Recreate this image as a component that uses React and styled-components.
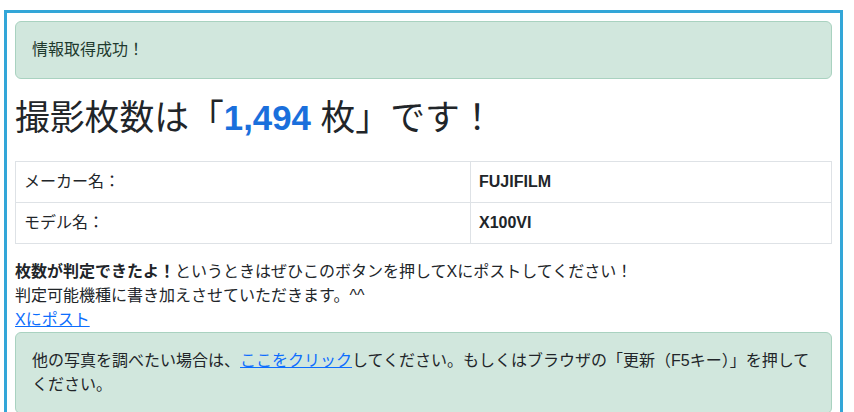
import React from 'react';
import styled, { createGlobalStyle } from 'styled-components';

const GlobalStyle = createGlobalStyle`
  body {
    margin: 0;
    background: #fff;
    color: #212529;
    font-family: "Liberation Sans", "Noto Sans CJK JP", sans-serif;
    font-size: 16px;
    line-height: 1.5;
  }
`;

const Frame = styled.div`
  margin: 10px 11px 0 4px;
  border: 3px solid #33a6d8;
  padding: 8px 8px 16px;
  min-height: 420px;
`;

const Alert = styled.div`
  background: #d1e7dd;
  border: 1px solid #a9d2c0;
  border-radius: 6px;
  padding: 16px;
  color: ${props => (props.dark ? '#212529' : '#1f3a2e')};
  margin-bottom: ${props => props.gap || 0}px;
`;

const Heading = styled.h1`
  margin: 0 0 22px;
  font-size: 34.8px;
  line-height: 1.2;
  font-weight: 400;
`;

const Count = styled.span`
  color: #1a6fdc;
  font-weight: 700;
`;

const Table = styled.table`
  width: 100%;
  border-collapse: collapse;
  table-layout: fixed;
  margin-bottom: 16px;
`;

const LabelCol = styled.col`
  width: 455px;
`;

const Cell = styled.td`
  border: 1px solid #dee2e6;
  padding: 8px;
  font-weight: ${props => (props.bold ? 700 : 400)};
  line-height: 24px;
`;

const Note = styled.p`
  margin: 0;
  line-height: 24px;
`;

const Link = styled.a`
  color: #0d6efd;
  text-decoration: underline;
`;

const rows = [
  { label: 'メーカー名：', value: 'FUJIFILM' },
  { label: 'モデル名：', value: 'X100VI' },
];

export default function App() {
  return (
    <>
      <GlobalStyle />
      <Frame>
        <Alert gap={18}>情報取得成功！</Alert>
        <Heading>
          撮影枚数は「<Count>1,494</Count> 枚」です！
        </Heading>
        <Table>
          <colgroup>
            <LabelCol />
            <col />
          </colgroup>
          <tbody>
            {rows.map(row => (
              <tr key={row.label}>
                <Cell>{row.label}</Cell>
                <Cell bold>{row.value}</Cell>
              </tr>
            ))}
          </tbody>
        </Table>
        <Note>
          <b>枚数が判定できたよ！</b>というときはぜひこのボタンを押してXにポストしてください！
          <br />
          判定可能機種に書き加えさせていただきます。^^
          <br />
          <Link href="#">Xにポスト</Link>
        </Note>
        <Alert dark>
          他の写真を調べたい場合は、<Link href="#">ここをクリック</Link>してください。もしくはブラウザの「更新（F5キー）」を押してください。
        </Alert>
      </Frame>
    </>
  );
}
